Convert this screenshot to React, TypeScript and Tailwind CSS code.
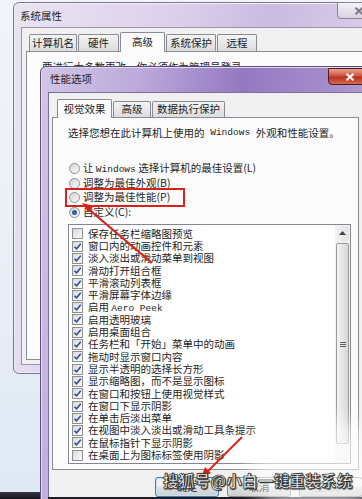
import React from "react";

const ITEMS: [string, boolean][] = [
  ["保存任务栏缩略图预览", false],
  ["窗口内的动画控件和元素", true],
  ["淡入淡出或滑动菜单到视图", true],
  ["滑动打开组合框", true],
  ["平滑滚动列表框", true],
  ["平滑屏幕字体边缘", true],
  ["启用 |Aero Peek", true],
  ["启用透明玻璃", true],
  ["启用桌面组合", true],
  ["任务栏和「开始」菜单中的动画", true],
  ["拖动时显示窗口内容", true],
  ["显示半透明的选择长方形", true],
  ["显示缩略图，而不是显示图标", true],
  ["在窗口和按钮上使用视觉样式", true],
  ["在窗口下显示阴影", true],
  ["在单击后淡出菜单", true],
  ["在视图中淡入淡出或滑动工具条提示", true],
  ["在鼠标指针下显示阴影", true],
  ["在桌面上为图标标签使用阴影", false],
];

const Mono = ({ children }: { children: React.ReactNode }) => (
  <span className="font-['Liberation_Mono',monospace] text-[9.5px]">{children}</span>
);

const Label = ({ text }: { text: string }) => {
  const [a, b] = text.split("|");
  return (
    <span className="whitespace-nowrap">
      {a}
      {b && <Mono>{b}</Mono>}
    </span>
  );
};

const Check = ({ on }: { on: boolean }) => (
  <span className="flex h-[11px] w-[11px] shrink-0 items-center justify-center border border-[#8e8f8f] bg-[linear-gradient(135deg,#d9d9d9,#fbfbfb)]">
    {on && (
      <svg viewBox="0 0 10 10" className="h-[9px] w-[9px]">
        <path d="M1.6 5.2 L4 7.6 L8.6 2" fill="none" stroke="#2c4c9c" strokeWidth="1.7" />
      </svg>
    )}
  </span>
);

const Radio = ({ on, children }: { on?: boolean; children: React.ReactNode }) => (
  <div className="flex h-[14.7px] items-center gap-[3px]">
    <span className="flex h-[11px] w-[11px] items-center justify-center rounded-full border border-[#8e8f8f] bg-[linear-gradient(135deg,#d4d4d4,#fafafa)]">
      {on && <span className="h-[5px] w-[5px] rounded-full bg-[#2f5fae]" />}
    </span>
    <span className="whitespace-nowrap">{children}</span>
  </div>
);

const Tab = ({ label, w, active, tall }: { label: string; w: number; active?: boolean; tall: number }) => (
  <div
    style={{ width: w }}
    className={
      active
        ? "relative z-10 -mb-px flex items-center justify-center rounded-t-[2px] border border-b-0 border-[#898c95] bg-[#fbfbfb]"
        : "flex items-center justify-center rounded-t-[2px] border border-b-0 border-[#898c95] bg-[linear-gradient(180deg,#f4f4f4,#dcdcdc)]"
    }
  >
    <span style={{ height: active ? tall + 3 : tall }} className="flex items-center">
      {label}
    </span>
  </div>
);

const CloseButton = ({ active }: { active?: boolean }) => (
  <div
    className={
      active
        ? "flex h-[17px] w-[43px] items-center justify-center rounded-b-[4px] border border-[#5a1a14] bg-[linear-gradient(180deg,#e8a396_0%,#d0523f_45%,#b8311f_55%,#d26a4f_100%)]"
        : "flex h-[17px] w-[43px] items-center justify-center rounded-b-[4px] border border-[#8a8496] bg-[linear-gradient(180deg,#f4f1f8,#d8d1e2)]"
    }
  >
    <svg viewBox="0 0 10 8" className="h-[8px] w-[10px]">
      <path
        d="M1.5 0.8 L8.5 7.2 M8.5 0.8 L1.5 7.2"
        stroke={active ? "#ffffff" : "#7a7582"}
        strokeWidth="2"
        fill="none"
      />
    </svg>
  </div>
);

const Button = ({ label, focus, disabled }: { label: string; focus?: boolean; disabled?: boolean }) => (
  <div
    className={
      "flex h-[20px] w-[64px] items-center justify-center rounded-[3px] border bg-[linear-gradient(180deg,#f3f3f3_0%,#ebebeb_50%,#dddddd_51%,#cfcfcf_100%)] " +
      (focus ? "border-[#3c7fb1] shadow-[inset_0_0_0_1px_#bde4f8]" : "border-[#8a8a8a]") +
      (disabled ? " text-[#9a9a9a]" : "")
    }
  >
    {label}
  </div>
);

const OuterWindow = () => (
  <div className="absolute left-[13px] top-[2px] flex h-[372px] w-[370px] flex-col rounded-[6px] border border-[#7d7290] bg-[linear-gradient(100deg,#e9e3f1_0%,#ddd2ec_35%,#cbbbe1_60%,#e2d9ee_100%)] shadow-[inset_0_0_0_1px_#f4f0f9]">
    <div className="relative flex h-[24px] items-center pl-[6px] pt-[2px]">
      系统属性
      <div className="absolute left-[323px] top-[-1px]">
        <CloseButton />
      </div>
    </div>
    <div className="mb-[8px] ml-[7px] flex flex-1 flex-col border border-[#9d93ad] bg-[#f0f0f0] pl-[4px] pt-[3px]">
      <div className="flex h-[20px] items-end gap-[1px] pl-[3px]">
        <Tab label="计算机名" w={48} tall={16} />
        <Tab label="硬件" w={41} tall={16} />
        <Tab label="高级" w={45} tall={16} active />
        <Tab label="系统保护" w={50} tall={16} />
        <Tab label="远程" w={40} tall={16} />
      </div>
      <div className="mb-[4px] flex-1 border border-[#898c95] bg-[#fbfbfb] pl-[15px] pt-[10px]">
        <span className="whitespace-nowrap">要进行大多数更改，你必须作为管理员登录。</span>
      </div>
    </div>
  </div>
);

const InnerWindow = () => (
  <div className="absolute left-[40px] top-[66px] z-10 flex h-[440px] w-[331px] flex-col rounded-t-[6px] border border-[#5e4e7c] bg-[linear-gradient(100deg,#d2c6e6_0%,#bba9da_25%,#9479c2_50%,#a38bcb_70%,#c5b6e0_100%)] shadow-[inset_0_0_0_1px_#e2daf0]">
    <div className="relative flex h-[25px] items-center pl-[9px]">
      性能选项
      <div className="absolute left-[287px] top-[1px]">
        <CloseButton active />
      </div>
    </div>
    <div className="ml-[7px] flex flex-1 flex-col border border-[#7d6e98] bg-[#f0f0f0] pl-[3px] pt-[5px]">
      <div className="flex h-[19px] items-end gap-[1px] pl-[5px]">
        <Tab label="视觉效果" w={55} tall={15} active />
        <Tab label="高级" w={38} tall={15} />
        <Tab label="数据执行保护" w={73} tall={15} />
      </div>
      <div className="flex h-[353px] w-[307px] flex-col border border-[#898c95] bg-[#fbfbfb] pl-[15px] pt-[9px]">
        <div className="flex h-[12px] items-center whitespace-nowrap">
          选择您想在此计算机上使用的 <Mono>&nbsp;Windows&nbsp;</Mono> 外观和性能设置。
        </div>
        <div className="ml-[1px] mt-[22px] flex flex-col">
          <Radio>
            让 <Mono>Windows</Mono> 选择计算机的最佳设置(L)
          </Radio>
          <Radio>调整为最佳外观(B)</Radio>
          <Radio>调整为最佳性能(P)</Radio>
          <Radio on>自定义(C):</Radio>
        </div>
        <div className="mt-[4px] flex h-[240px] w-[283px] border border-[#828790] bg-white">
          <div className="flex flex-1 flex-col pl-[3px] pt-[3px]">
            {ITEMS.map(([t, on]) => (
              <div key={t} className="flex h-[12.3px] items-center gap-[5px]">
                <Check on={on} />
                <Label text={t} />
              </div>
            ))}
          </div>
          <div className="flex w-[15px] flex-col bg-[#f0f0f0] p-px">
            <div className="flex h-[15px] items-center justify-center rounded-[2px] bg-[linear-gradient(90deg,#f2f2f2,#e2e2e2)]">
              <svg viewBox="0 0 7 4" className="h-[4px] w-[7px]">
                <path d="M0 4 L3.5 0 L7 4 Z" fill="#404040" />
              </svg>
            </div>
            <div className="mt-[2px] flex h-[201px] items-end justify-center rounded-[2px] border border-[#9a9a9a] bg-[linear-gradient(90deg,#f3f3f3,#d6d6d6)] pb-[96px]">
              <div className="flex flex-col gap-[1px]">
                <span className="h-px w-[6px] bg-[#606060]" />
                <span className="h-px w-[6px] bg-[#606060]" />
                <span className="h-px w-[6px] bg-[#606060]" />
              </div>
            </div>
          </div>
        </div>
      </div>
      <div className="ml-[103px] mt-[7px] flex gap-[8px]">
        <Button label="确定" focus />
        <Button label="取消" />
        <Button label="应用(A)" disabled />
      </div>
    </div>
  </div>
);

const Annotations = () => (
  <>
    <div className="absolute left-[65px] top-[188px] z-20 h-[19px] w-[120px] border-2 border-[#d8231b]" />
    <svg className="absolute left-0 top-0 z-20 h-[499px] w-[362px]" viewBox="0 0 362 499">
      <path d="M152 263 L86 207" stroke="#d8231b" strokeWidth="2.2" fill="none" />
      <path d="M82 203 L94 206 L88 212 Z" fill="#d8231b" />
      <path d="M242 437 L205 474" stroke="#d8231b" strokeWidth="2" fill="none" />
      <path d="M201 478 L205 467 L211 473 Z" fill="#d8231b" />
    </svg>
  </>
);

export default function App() {
  return (
    <div className="relative h-[499px] w-[362px] overflow-hidden bg-[linear-gradient(180deg,#f1f5fa_0%,#dfe9f4_100%)] font-['Noto_Sans_CJK_SC',sans-serif] text-[10.5px] leading-none text-[#1e1e1e]">
      <OuterWindow />
      <InnerWindow />
      <div className="absolute left-0 top-[492px] h-[7px] w-[362px] bg-[linear-gradient(180deg,#3a3646,#15141c)]" />
      <div className="absolute left-[48px] top-[497px] z-10 h-[2px] w-[314px] bg-[#1d1c24]" />
      <div className="absolute left-[250px] top-[420px] z-10 h-[90px] w-[130px] rounded-[40px] bg-white/60 blur-[10px]" />
      <Annotations />
      <div className="absolute left-[163px] top-[473px] z-30 whitespace-nowrap text-[15.5px] font-bold tracking-[0.3px] text-[#f4f4f4] [-webkit-text-stroke:0.6px_#2a2a2a] [text-shadow:0_0_1px_#000,1px_1px_1px_#333]">
        搜狐号@小白一键重装系统
      </div>
    </div>
  );
}
